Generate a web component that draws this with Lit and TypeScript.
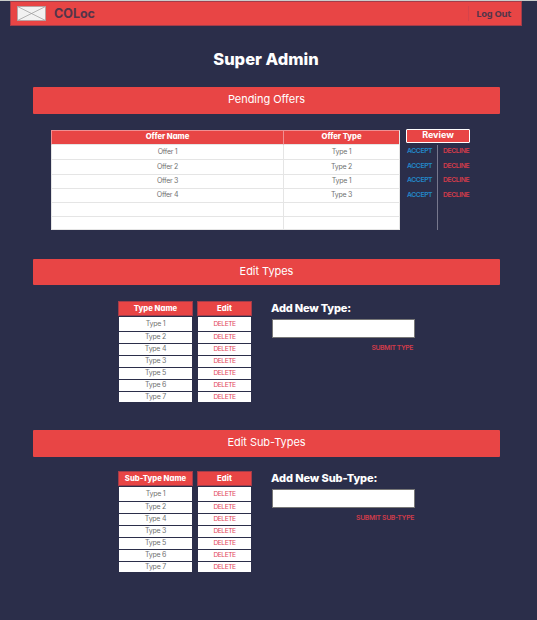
import { LitElement, html, css } from "lit";
import { customElement, property } from "lit/decorators.js";

const RED = css`#e84545`;

@customElement("type-editor")
class TypeEditor extends LitElement {
  @property() kind = "Type";

  static styles = css`
    :host { display: flex; height: 145px; padding: 16px 0 0 118px; box-sizing: border-box; }
    :host(.second) { padding-top: 14px; }
    .col { display: flex; flex-direction: column; box-sizing: border-box; }
    .names { width: 75px; margin-right: 4px; }
    .edits { width: 55px; margin-right: 20px; }
    .head {
      height: 15px; margin-bottom: 1px; box-sizing: border-box; background: ${RED};
      border: 1px solid #a43c49; color: #fff; font-weight: 800; font-size: 7.7px;
      line-height: 13px; text-align: center; white-space: nowrap; letter-spacing: 0.02px;
    }
    .cell {
      height: 11px; margin: 0 1px 1px; background: #fff; color: #707070; font-size: 7px;
      line-height: 10.5px; text-align: center; letter-spacing: -0.25px;
    }
    .cell.first { height: 14px; line-height: 14px; }
    .cell:last-child { height: 10px; }
    .edits .cell { color: #e2495c; font-size: 6.7px; letter-spacing: -0.5px; }
    .form { width: 143px; display: flex; flex-direction: column; }
    .label { height: 18px; margin-left: -1px; color: #fff; font-weight: 800; font-size: 11px; line-height: 15px; letter-spacing: -0.2px; white-space: nowrap; }
    :host(.second) .label { letter-spacing: -0.1px; }
    .input { height: 19px; box-sizing: border-box; padding: 0; border: 1px solid #777; border-radius: 0; background: #fff; }
    .submit { margin: 5px 2px 0 0; color: #d03c4b; font-size: 6.8px; font-weight: 600; line-height: 10px; text-align: right; letter-spacing: -0.42px; }
    :host(.second) .submit { margin-right: 1px; letter-spacing: -0.32px; }
  `;

  render() {
    const order = [1, 2, 4, 3, 5, 6, 7];
    return html`
      <div class="col names">
        <div class="head">${this.kind} Name</div>
        ${order.map((n, i) => html`<div class="cell ${i ? "" : "first"}">Type ${n}</div>`)}
      </div>
      <div class="col edits">
        <div class="head">Edit</div>
        ${order.map((_, i) => html`<div class="cell ${i ? "" : "first"}">DELETE</div>`)}
      </div>
      <div class="form">
        <div class="label">Add New ${this.kind}:</div>
        <input class="input" />
        <div class="submit">SUBMIT ${this.kind.toUpperCase()}</div>
      </div>`;
  }
}

@customElement("app-root")
class AppRoot extends LitElement {
  static styles = css`
    :host {
      display: block; height: 620px; box-sizing: border-box; overflow: hidden;
      background: #2b2e4a; border-top: 1px solid #c9cdcb;
      font-family: Inter, "Open Sans", sans-serif; font-feature-settings: "cv11";
    }
    .top {
      display: flex; align-items: center; height: 25px; width: 512px; margin-left: 10px;
      box-sizing: border-box; background: ${RED}; border: 1px solid #a43c49; padding: 0 10px 0 6px;
      color: #53354a; font-weight: 700;
    }
    .logo { display: block; width: 29px; height: 15px; margin-right: 8px; }
    .brand { font-size: 12.5px; flex: 1; line-height: 23px; }
    .logout { font-family: "Noto Sans", sans-serif; font-size: 9.3px; letter-spacing: -0.3px; border-left: 1px solid #d5434a; padding-left: 7px; line-height: 15px; }
    h1 { margin: 24px 0 0; width: 532px; height: 37px; text-align: center; color: #fff; font-size: 16.5px; font-weight: 800; line-height: 19px; letter-spacing: 0; }
    .bar { width: 467px; height: 27px; margin-left: 33px; background: ${RED}; border-radius: 1px; color: #fff; font-size: 11px; line-height: 25px; text-align: center; letter-spacing: -0.05px; }
    .bar.short { height: 26px; }
    .pending { display: flex; height: 145px; padding: 15px 0 0 51px; box-sizing: border-box; }
    .offers {
      display: grid; grid-template-columns: 232px 117px; grid-template-rows: 15px 15px 15px 14px 14px 14px 13px;
      width: 349px; height: 101px; box-sizing: border-box; margin-right: 6px; padding-top: 1px;
    }
    .offers div { box-sizing: border-box; background: #fff; color: #707070; font-size: 7px; line-height: 13.5px; text-align: center; border-bottom: 1px solid #e5e5e5; border-left: 1px solid #e5e5e5; letter-spacing: -0.27px; }
    .offers div:nth-child(n + 7) { line-height: 12px; }
    .offers div:nth-child(even) { border-right: 1px solid #e5e5e5; }
    .offers .th { background: ${RED}; color: #fff; font-weight: 800; font-size: 7.7px; line-height: 12px; border-top: 1px solid #ef9ba0; border-color: #ef8f92; border-bottom-color: #e5e5e5; letter-spacing: -0.02px; }
    .review { width: 64px; }
    .rhead { height: 14px; box-sizing: border-box; border: 1px solid #fff; border-radius: 1px; background: ${RED}; color: #fff; font-size: 9px; font-weight: 700; line-height: 10px; text-align: center; }
    .actions { display: flex; margin-top: 2px; height: 85px; font-size: 6.8px; font-weight: 600; }
    .actions span { display: block; height: 14.6px; line-height: 12px; letter-spacing: -0.42px; }
    .accept { width: 30px; padding-left: 1px; color: #2388c8; border-right: 1px solid #77788d; }
    .decline { padding-left: 5px; color: #d43c4b; }
  `;

  render() {
    const offers = ["Type 1", "Type 2", "Type 1", "Type 3", "", ""];
    const rows = [0, 1, 2, 3];
    return html`
      <div class="top">
        <svg class="logo" viewBox="0 0 29 15">
          <rect x=".5" y=".5" width="28" height="14" fill="#f2f2f2" stroke="#b8a3a3" />
          <path d="M.5 .5 28.5 14.5M28.5 .5 .5 14.5" stroke="#999" stroke-width=".7" />
        </svg>
        <span class="brand">COLoc</span>
        <span class="logout">Log Out</span>
      </div>
      <h1>Super Admin</h1>
      <div class="bar">Pending Offers</div>
      <div class="pending">
        <div class="offers">
          <div class="th">Offer Name</div><div class="th">Offer Type</div>
          ${offers.map((t, i) => html`<div>${t ? `Offer ${i + 1}` : ""}</div><div>${t}</div>`)}
        </div>
        <div class="review">
          <div class="rhead">Review</div>
          <div class="actions">
            <div class="accept">${rows.map(() => html`<span>ACCEPT</span>`)}</div>
            <div class="decline">${rows.map(() => html`<span>DECLINE</span>`)}</div>
          </div>
        </div>
      </div>
      <div class="bar short">Edit Types</div>
      <type-editor kind="Type"></type-editor>
      <div class="bar">Edit Sub-Types</div>
      <type-editor kind="Sub-Type" class="second"></type-editor>`;
  }
}
